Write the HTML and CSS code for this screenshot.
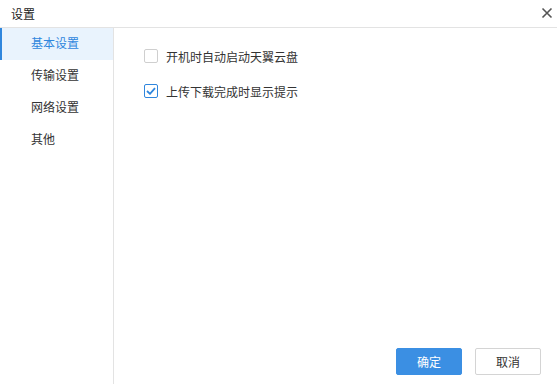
FILE: index.html
```html
<!DOCTYPE html>
<html lang="zh-CN">
<head>
    <meta charset="UTF-8">
    <title>设置</title>
    <link rel="stylesheet" href="styles.css">
</head>
<body>
    <div class="dialog">
        <header class="title-bar">
            <span class="title">设置</span>
            <span class="close">
                <svg width="12" height="12" viewBox="0 0 12 12">
                    <path d="M1.5 1.5 L10.5 10.5 M10.5 1.5 L1.5 10.5" stroke="#555" stroke-width="1.6" fill="none"/>
                </svg>
            </span>
        </header>

        <div class="body">
            <nav class="side">
                <a class="side-item active">基本设置</a>
                <a class="side-item">传输设置</a>
                <a class="side-item">网络设置</a>
                <a class="side-item">其他</a>
            </nav>

            <main class="content">
                <div class="options">
                    <label class="option">
                        <span class="check"></span>
                        <span>开机时自动启动天翼云盘</span>
                    </label>
                    <label class="option">
                        <span class="check checked">
                            <svg width="10" height="8" viewBox="0 0 10 8">
                                <path d="M1 4 L4 6.8 L9 1.2" stroke="#2f86dd" stroke-width="1.8" fill="none"/>
                            </svg>
                        </span>
                        <span>上传下载完成时显示提示</span>
                    </label>
                </div>

                <div class="actions">
                    <button class="btn btn-primary">确定</button>
                    <button class="btn">取消</button>
                </div>
            </main>
        </div>
    </div>
</body>
</html>
```

FILE: styles.css
```css
* {
    margin: 0;
    padding: 0;
    box-sizing: border-box;
}

body {
    width: 557px;
    height: 384px;
    background: #fff;
    font-family: "Microsoft YaHei", "Noto Sans CJK SC", sans-serif;
    font-size: 12px;
    color: #333;
    overflow: hidden;
}

.dialog {
    display: flex;
    flex-direction: column;
    height: 384px;
}

.title-bar {
    height: 28px;
    display: flex;
    align-items: center;
    justify-content: space-between;
    padding: 0 8px 1px 11px;
    border-bottom: 1px solid #e3e3e3;
    flex-shrink: 0;
}

.title {
    color: #222;
}

.close {
    display: flex;
    width: 12px;
    height: 14px;
    align-items: center;
    justify-content: center;
    margin-right: -4px;
}

.body {
    flex: 1;
    display: flex;
}

.side {
    width: 114px;
    border-right: 1px solid #e3e3e3;
    display: flex;
    flex-direction: column;
}

.side-item {
    height: 32px;
    line-height: 30px;
    padding-left: 31px;
    color: #333;
    cursor: pointer;
}

.side-item.active {
    background: #e9f3fd;
    color: #2f86dd;
    box-shadow: inset 2px 0 0 #2f86dd;
}

.content {
    flex: 1;
    display: flex;
    flex-direction: column;
    justify-content: space-between;
    padding: 19px 16px 9px 30px;
}

.options {
    display: flex;
    flex-direction: column;
    gap: 17px;
}

.option {
    display: flex;
    align-items: center;
    gap: 8px;
    height: 18px;
    color: #333;
}

.check {
    width: 14px;
    height: 14px;
    border: 1px solid #cfcfcf;
    border-radius: 2px;
    display: flex;
    align-items: center;
    justify-content: center;
}

.check.checked {
    border-color: #2f86dd;
}

.actions {
    display: flex;
    justify-content: flex-end;
    gap: 13px;
}

.btn {
    width: 66px;
    height: 27px;
    border: 1px solid #d4d4d4;
    border-radius: 2px;
    background: #fff;
    color: #333;
    font-family: inherit;
    font-size: 12px;
    cursor: pointer;
}

.btn-primary {
    background: #3b8fe3;
    border-color: #3b8fe3;
    color: #fff;
}
```
